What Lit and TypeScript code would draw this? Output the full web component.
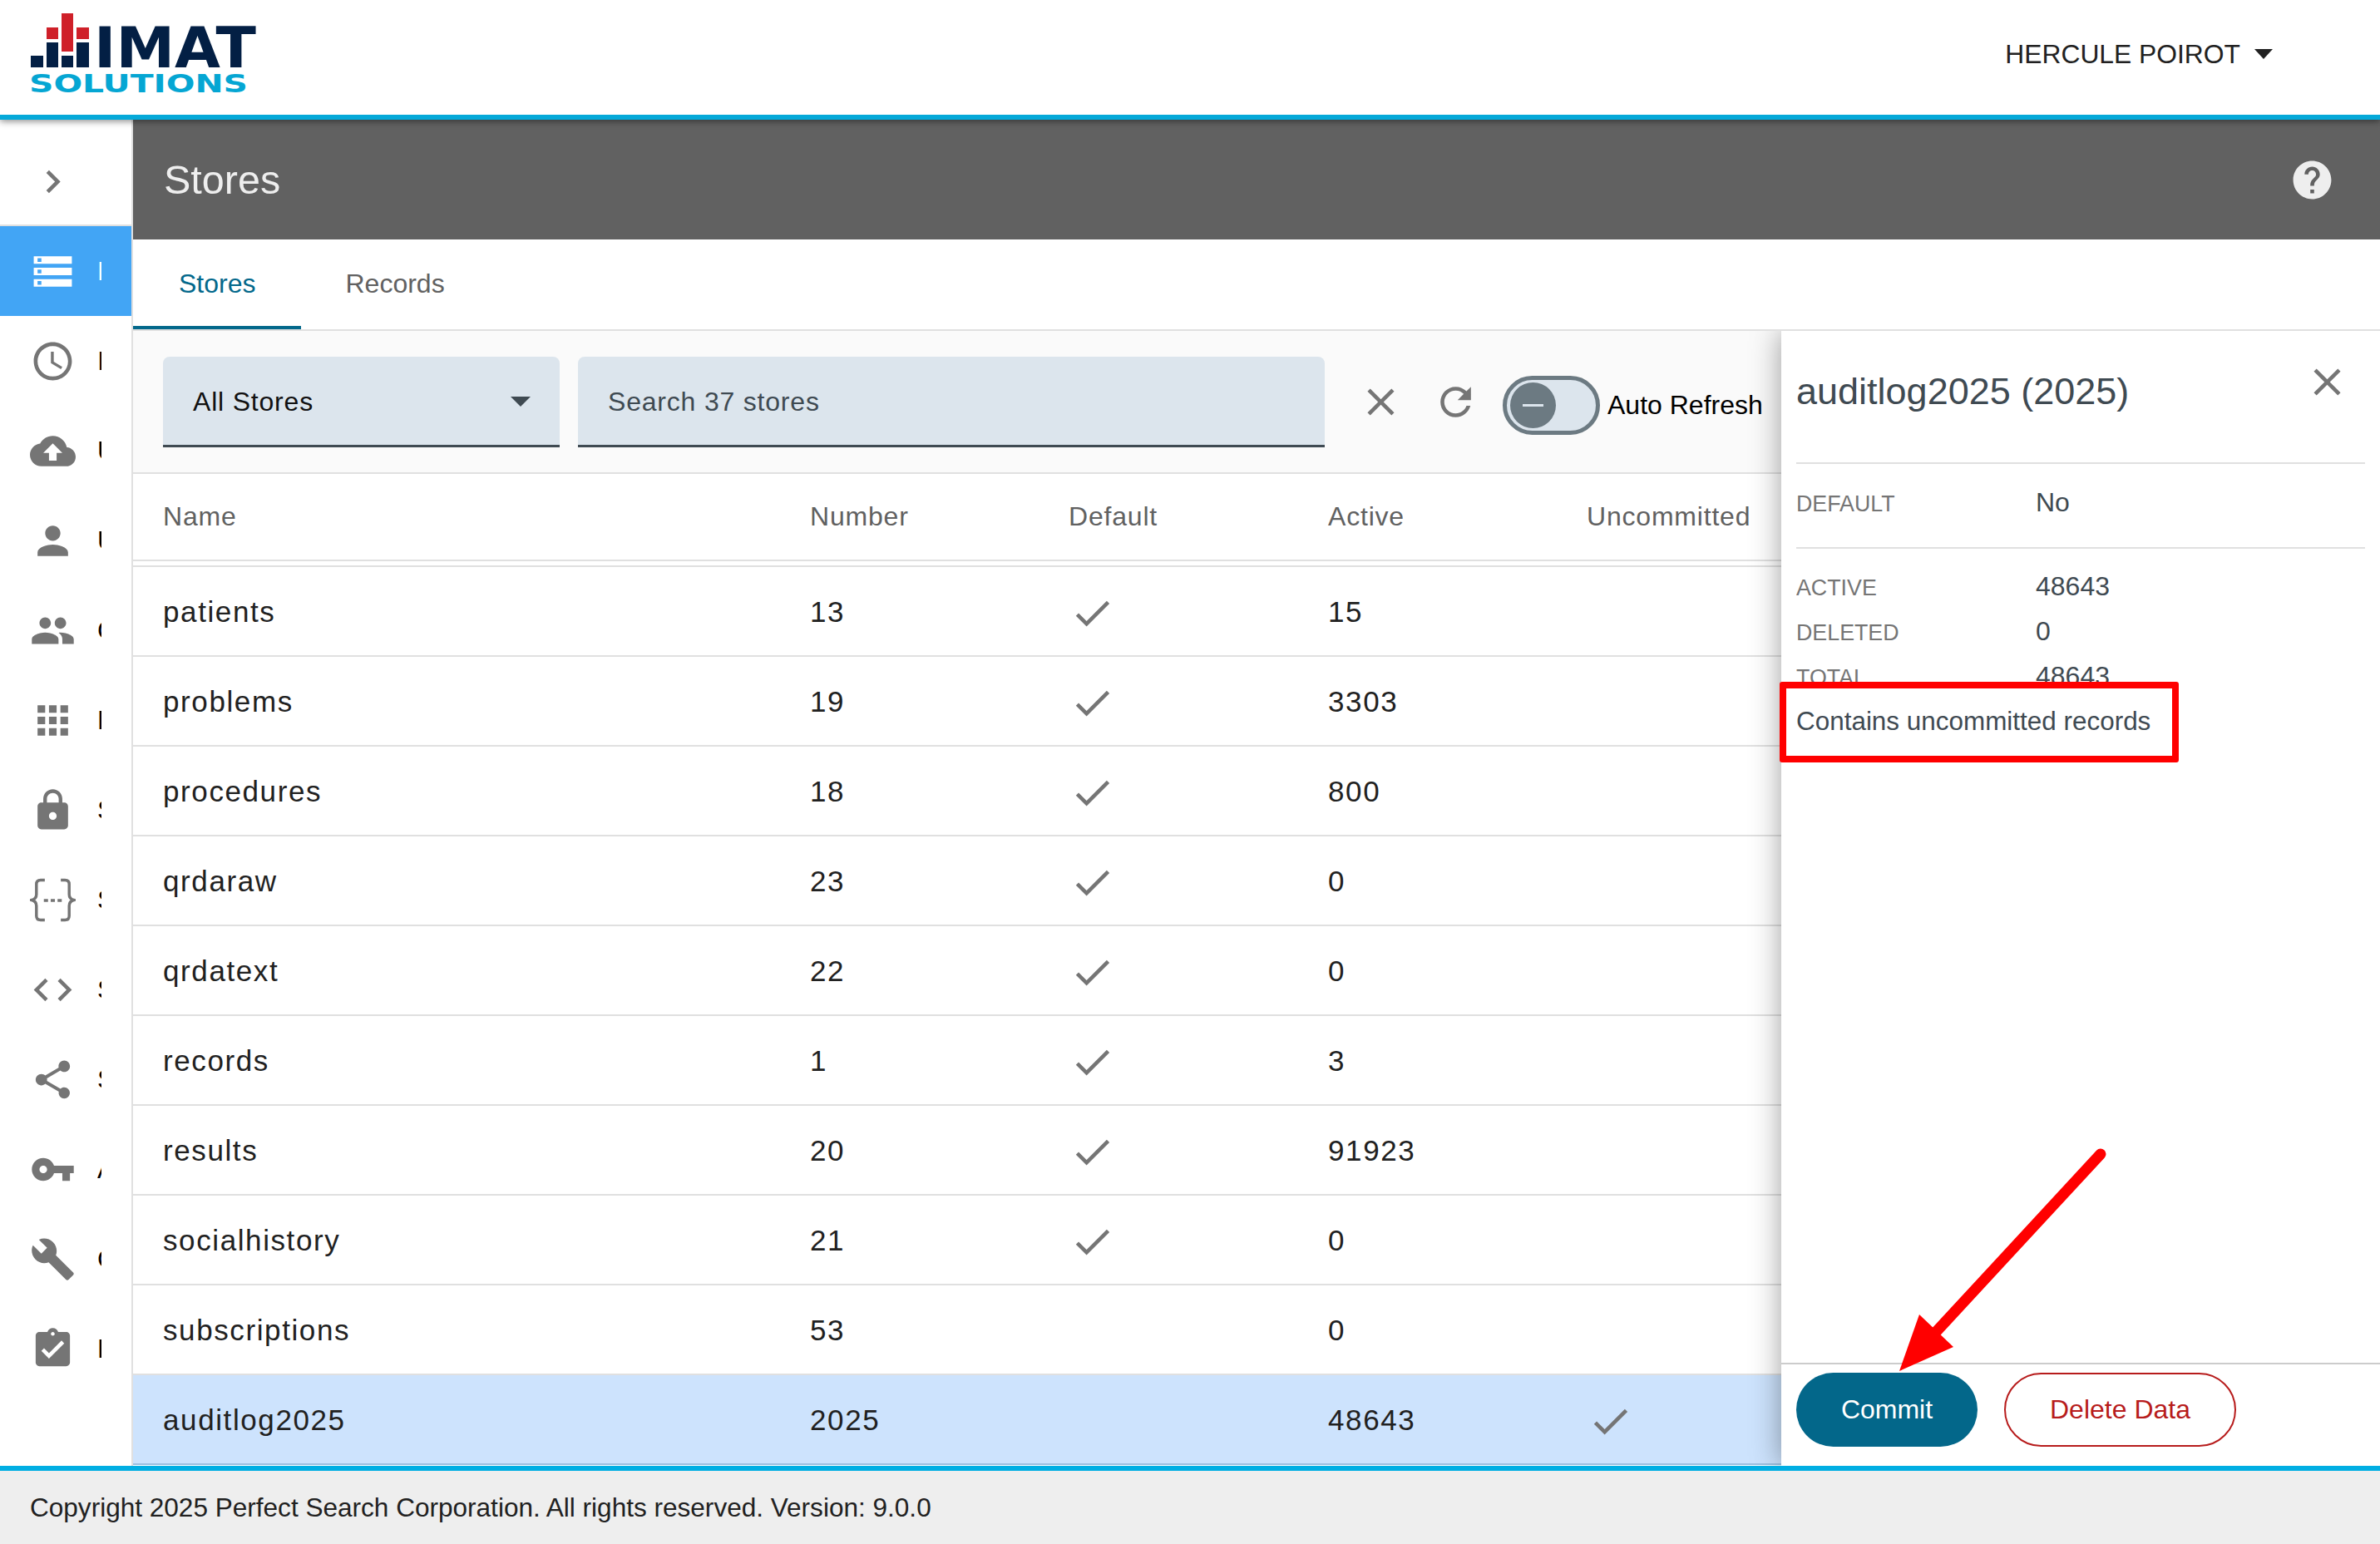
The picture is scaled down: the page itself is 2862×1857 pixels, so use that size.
import { css, html, LitElement, svg } from 'lit';
import { customElement } from 'lit/decorators.js';

const ICONS: Record<string, string> = {
  chevron: 'M10 6L8.59 7.41 13.17 12l-4.58 4.59L10 18l6-6z',
  storage: 'M2 20h20v-4H2v4zm2-3h2v2H4v-2zM2 4v4h20V4H2zm4 3H4V5h2v2zm-4 7h20v-4H2v4zm2-3h2v2H4v-2z',
  schedule: 'M11.99 2C6.47 2 2 6.48 2 12s4.47 10 9.99 10C17.52 22 22 17.52 22 12S17.52 2 11.99 2zM12 20c-4.42 0-8-3.58-8-8s3.58-8 8-8 8 3.58 8 8-3.58 8-8 8zm.5-13H11v6l5.25 3.15.75-1.23-4.5-2.67z',
  upload: 'M19.35 10.04C18.67 6.59 15.64 4 12 4 9.11 4 6.6 5.64 5.35 8.04 2.34 8.36 0 10.91 0 14c0 3.31 2.69 6 6 6h13c2.76 0 5-2.24 5-5 0-2.64-2.05-4.78-4.65-4.96zM14 13v4h-4v-4H7l5-5 5 5h-3z',
  person: 'M12 12c2.21 0 4-1.79 4-4s-1.79-4-4-4-4 1.79-4 4 1.79 4 4 4zm0 2c-2.67 0-8 1.34-8 4v2h16v-2c0-2.66-5.33-4-8-4z',
  people: 'M16 11c1.66 0 2.99-1.34 2.99-3S17.66 5 16 5c-1.66 0-3 1.34-3 3s1.34 3 3 3zm-8 0c1.66 0 2.99-1.34 2.99-3S9.66 5 8 5C6.34 5 5 6.34 5 8s1.34 3 3 3zm0 2c-2.33 0-7 1.17-7 3.5V19h14v-2.5c0-2.33-4.67-3.5-7-3.5zm8 0c-.29 0-.62.02-.97.05 1.16.84 1.97 1.97 1.97 3.45V19h6v-2.5c0-2.33-4.67-3.5-7-3.5z',
  apps: 'M4 8h4V4H4v4zm6 12h4v-4h-4v4zm-6 0h4v-4H4v4zm0-6h4v-4H4v4zm6 0h4v-4h-4v4zm6-10v4h4V4h-4zm-6 4h4V4h-4v4zm6 6h4v-4h-4v4zm0 6h4v-4h-4v4z',
  lock: 'M18 8h-1V6c0-2.76-2.24-5-5-5S7 3.24 7 6v2H6c-1.1 0-2 .9-2 2v10c0 1.1.9 2 2 2h12c1.1 0 2-.9 2-2V10c0-1.1-.9-2-2-2zm-6 9c-1.1 0-2-.9-2-2s.9-2 2-2 2 .9 2 2-.9 2-2 2zm3.1-9H8.9V6c0-1.71 1.39-3.1 3.1-3.1 1.71 0 3.1 1.39 3.1 3.1v2z',
  code: 'M9.4 16.6L4.8 12l4.6-4.6L8 6l-6 6 6 6 1.4-1.4zm5.2 0l4.6-4.6-4.6-4.6L16 6l6 6-6 6-1.4-1.4z',
  share: 'M18 16.08c-.76 0-1.44.3-1.96.77L8.91 12.7c.05-.23.09-.46.09-.7s-.04-.47-.09-.7l7.05-4.11c.54.5 1.25.81 2.04.81 1.66 0 3-1.34 3-3s-1.34-3-3-3-3 1.34-3 3c0 .24.04.47.09.7L8.04 9.81C7.5 9.31 6.79 9 6 9c-1.66 0-3 1.34-3 3s1.34 3 3 3c.79 0 1.5-.31 2.04-.81l7.12 4.16c-.05.21-.08.43-.08.65 0 1.61 1.31 2.92 2.92 2.92 1.61 0 2.92-1.31 2.92-2.92s-1.31-2.92-2.92-2.92z',
  key: 'M12.65 10C11.83 7.67 9.61 6 7 6c-3.31 0-6 2.69-6 6s2.69 6 6 6c2.61 0 4.83-1.67 5.65-4H17v4h4v-4h2v-4H12.65zM7 14c-1.1 0-2-.9-2-2s.9-2 2-2 2 .9 2 2-.9 2-2 2z',
  build: 'M22.7 19l-9.1-9.1c.9-2.3.4-5-1.5-6.9-2-2-5-2.4-7.4-1.3L9 6 6 9 1.6 4.7C.4 7.1.9 10.1 2.9 12.1c1.9 1.9 4.6 2.4 6.9 1.5l9.1 9.1c.4.4 1 .4 1.4 0l2.3-2.3c.5-.4.5-1.1.1-1.4z',
  assignment: 'M19 3h-4.18C14.4 1.84 13.3 1 12 1c-1.3 0-2.4.84-2.82 2H5c-1.1 0-2 .9-2 2v14c0 1.1.9 2 2 2h14c1.1 0 2-.9 2-2V5c0-1.1-.9-2-2-2zm-7 0c.55 0 1 .45 1 1s-.45 1-1 1-1-.45-1-1 .45-1 1-1zm-2 14l-4-4 1.41-1.41L10 14.17l6.59-6.59L18 9l-8 8z',
  close: 'M19 6.41L17.59 5 12 10.59 6.41 5 5 6.41 10.59 12 5 17.59 6.41 19 12 13.41 17.59 19 19 17.59 13.41 12z',
  refresh: 'M17.65 6.35C16.2 4.9 14.21 4 12 4c-4.42 0-7.99 3.58-7.99 8s3.57 8 7.99 8c3.73 0 6.84-2.55 7.73-6h-2.08c-.82 2.33-3.04 4-5.65 4-3.31 0-6-2.69-6-6s2.69-6 6-6c1.66 0 3.14.69 4.22 1.78L13 11h7V4l-2.35 2.35z',
  help: 'M12 2C6.48 2 2 6.48 2 12s4.48 10 10 10 10-4.48 10-10S17.52 2 12 2zm1 17h-2v-2h2v2zm2.07-7.75l-.9.92C13.45 12.9 13 13.5 13 15h-2v-.5c0-1.1.45-2.1 1.17-2.83l1.24-1.26c.37-.36.59-.86.59-1.41 0-1.1-.9-2-2-2s-2 .9-2 2H8c0-2.21 1.79-4 4-4s4 1.79 4 4c0 .88-.36 1.68-.93 2.25z',
  check: 'M9 16.17L4.83 12l-1.42 1.41L9 19 21 7l-1.41-1.41z',
};

const NAV = [
  { icon: 'storage', label: 'Data Stores', selected: true },
  { icon: 'schedule', label: 'Importer' },
  { icon: 'upload', label: 'Upload' },
  { icon: 'person', label: 'Users' },
  { icon: 'people', label: 'Groups' },
  { icon: 'apps', label: 'Modules' },
  { icon: 'lock', label: 'Security' },
  { icon: 'braces', label: 'Schemas' },
  { icon: 'code', label: 'Scripts' },
  { icon: 'share', label: 'Sharing' },
  { icon: 'key', label: 'API Keys' },
  { icon: 'build', label: 'Configuration' },
  { icon: 'assignment', label: 'Reports' },
];

const STORES = [
  { name: 'patients', number: '13', def: true, active: '15' },
  { name: 'problems', number: '19', def: true, active: '3303' },
  { name: 'procedures', number: '18', def: true, active: '800' },
  { name: 'qrdaraw', number: '23', def: true, active: '0' },
  { name: 'qrdatext', number: '22', def: true, active: '0' },
  { name: 'records', number: '1', def: true, active: '3' },
  { name: 'results', number: '20', def: true, active: '91923' },
  { name: 'socialhistory', number: '21', def: true, active: '0' },
  { name: 'subscriptions', number: '53', def: false, active: '0' },
  { name: 'auditlog2025', number: '2025', def: false, active: '48643', uncommitted: true },
];

const STATS = [
  { label: 'ACTIVE', value: '48643' },
  { label: 'DELETED', value: '0' },
  { label: 'TOTAL', value: '48643' },
];

function icon(name: string) {
  if (name === 'braces') {
    return html`<svg class="icon" viewBox="0 0 24 24">
      <path class="stroke" d="M7.8 1.5H5.6c-1.5 0-2.2.8-2.2 2.2V9c0 1.7-1 2.6-2.4 3 1.4.4 2.4 1.3 2.4 3v5.3c0 1.4.7 2.2 2.2 2.2h2.2" />
      <path class="stroke" d="M16.2 1.5h2.2c1.5 0 2.2.8 2.2 2.2V9c0 1.7 1 2.6 2.4 3-1.4.4-2.4 1.3-2.4 3v5.3c0 1.4-.7 2.2-2.2 2.2h-2.2" />
      <path d="M7.3 11.4h2.2V13H7.3zM10.9 11.4h2.2V13h-2.2zM14.5 11.4h2.2V13h-2.2z" />
    </svg>`;
  }
  return html`<svg class="icon" viewBox="0 0 24 24"><path d=${ICONS[name]} /></svg>`;
}

@customElement('app-root')
export class AppRoot extends LitElement {
  static styles = css`
    :host {
      display: block;
      width: 2862px;
      height: 1857px;
      overflow: hidden;
      position: relative;
      background: #fff;
      color: #212121;
      font-family: 'Liberation Sans', Arial, sans-serif;
      font-size: 32px;
    }

    .app {
      display: flex;
      flex-direction: column;
      height: 100%;
    }

    .icon {
      display: block;
      flex: none;
      width: 55px;
      height: 55px;
      fill: #757575;
    }

    .icon .stroke {
      fill: none;
      stroke: #757575;
      stroke-width: 1.5;
    }

    /* Top bar */
    .topbar {
      flex: none;
      position: relative;
      z-index: 3;
      box-sizing: border-box;
      height: 144px;
      display: flex;
      align-items: center;
      justify-content: space-between;
      background: #fff;
      border-bottom: 6px solid #05a9d9;
      box-shadow: 0 2px 8px rgba(0, 0, 0, 0.45);
    }

    .logo {
      display: block;
      width: 320px;
      height: 138px;
    }

    .logo-imat {
      font-family: 'DejaVu Sans', sans-serif;
      font-size: 67px;
      font-weight: 700;
      fill: #031f44;
    }

    .logo-sol {
      font-family: 'DejaVu Sans', sans-serif;
      font-size: 30px;
      font-weight: 700;
      fill: #05a6d3;
    }

    .user {
      display: flex;
      align-items: center;
      margin-right: 129px;
      margin-bottom: 8px;
      font-size: 31.8px;
    }

    .user-caret {
      width: 0;
      height: 0;
      margin-left: 17px;
      border-left: 11px solid transparent;
      border-right: 11px solid transparent;
      border-top: 12px solid #212121;
    }

    /* Body */
    .body {
      flex: 1;
      min-height: 0;
      display: flex;
    }

    .sidenav {
      flex: none;
      width: 158px;
      border-right: 2px solid #e0e0e0;
    }

    .nav-toggle {
      box-sizing: border-box;
      height: 128px;
      padding: 22px 0 0 36px;
      display: flex;
      align-items: center;
      border-bottom: 2px solid #e0e0e0;
    }

    .nav-item {
      height: 108px;
      display: flex;
      align-items: center;
      padding-left: 35.5px;
      color: #000;
    }

    .nav-item.selected {
      background: #42a5f5;
      color: #fff;
    }

    .nav-item.selected .icon {
      fill: #fff;
    }

    .nav-label {
      margin-left: 26.5px;
      width: 5px;
      overflow: hidden;
      white-space: nowrap;
    }

    .main {
      flex: 1;
      min-width: 0;
      display: flex;
      flex-direction: column;
    }

    .title-bar {
      flex: none;
      box-sizing: border-box;
      height: 144px;
      padding: 0 54px 0 37px;
      display: flex;
      align-items: center;
      justify-content: space-between;
      background: #616161;
      color: #eee;
      font-size: 48.5px;
    }

    .title-bar .icon {
      fill: #eee;
    }

    .tabs {
      flex: none;
      box-sizing: border-box;
      height: 110px;
      display: flex;
      border-bottom: 2px solid #e0e0e0;
    }

    .tab {
      box-sizing: border-box;
      height: 108px;
      padding: 3px 55px 0;
      display: flex;
      align-items: center;
      color: #616161;
      border-bottom: 4px solid transparent;
    }

    .tab.active {
      color: #03688b;
      border-bottom-color: #03688b;
    }

    .tab + .tab {
      margin-left: -2px;
    }

    .content {
      flex: 1;
      min-height: 0;
      display: flex;
      overflow: hidden;
    }

    .stores {
      flex: 1;
      min-width: 0;
    }

    /* Toolbar */
    .toolbar {
      box-sizing: border-box;
      height: 172px;
      display: flex;
      align-items: center;
      padding-left: 36px;
      background: #fafafa;
      border-bottom: 2px solid #e0e0e0;
      letter-spacing: 0.8px;
    }

    .field {
      box-sizing: border-box;
      height: 109px;
      display: flex;
      align-items: center;
      justify-content: space-between;
      padding: 3px 35px 0 36px;
      background: #dce5ed;
      border-bottom: 3px solid #3f4a52;
      border-radius: 8px 8px 0 0;
    }

    .field-select {
      width: 477px;
      color: #111;
    }

    .field-search {
      width: 898px;
      margin-left: 22px;
      color: #3f4a52;
    }

    .field-caret {
      width: 0;
      height: 0;
      border-left: 12px solid transparent;
      border-right: 12px solid transparent;
      border-top: 12px solid #3f4a52;
    }

    .tool-close {
      margin-left: 40px;
    }

    .tool-refresh {
      margin-left: 35px;
    }

    .switch {
      box-sizing: border-box;
      width: 117px;
      height: 71px;
      margin: 8px 0 0 29px;
      padding-left: 4px;
      display: flex;
      align-items: center;
      background: #dce5ed;
      border: 5px solid #6c7a82;
      border-radius: 36px;
    }

    .switch-thumb {
      width: 55px;
      height: 55px;
      display: flex;
      align-items: center;
      justify-content: center;
      border-radius: 50%;
      background: #6c7a82;
    }

    .switch-thumb i {
      display: block;
      width: 25px;
      height: 3px;
      background: #dce5ed;
    }

    .switch-label {
      margin: 8px 0 0 9px;
      color: #000;
      letter-spacing: 0;
      white-space: nowrap;
    }

    /* Table */
    .row {
      display: grid;
      grid-template-columns: 778px 311px 312px 311px 1fr;
      align-items: center;
      padding-left: 36px;
      white-space: nowrap;
    }

    .row-head {
      box-sizing: border-box;
      height: 105px;
      border-bottom: 2px solid #e0e0e0;
      margin-bottom: 5px;
      color: #616161;
      letter-spacing: 0.8px;
    }

    .row-body {
      box-sizing: border-box;
      height: 108px;
      padding-top: 2px;
      font-size: 35px;
      letter-spacing: 1.6px;
      border-bottom: 2px solid #e0e0e0;
    }

    .row-first {
      border-top: 2px solid #e0e0e0;
      height: 110px;
    }

    .row-body .icon {
      margin: 2px 0 0 1px;
    }

    .row-body.selected {
      background: #cde3fd;
      border-bottom-color: #9bbfe0;
    }

    /* Detail panel */
    .panel {
      flex: none;
      position: relative;
      z-index: 1;
      width: 720px;
      display: flex;
      flex-direction: column;
      background: #fff;
      color: #3f4a52;
      box-shadow: 0 0 34px rgba(0, 0, 0, 0.38);
    }

    .panel-head {
      box-sizing: border-box;
      height: 160px;
      margin: 0 18px;
      display: flex;
      justify-content: space-between;
      border-bottom: 2px solid #e0e0e0;
    }

    .panel-title {
      margin-top: 48px;
      font-size: 45px;
      line-height: 50px;
    }

    .panel-head .icon {
      margin: 34px 18px 0 0;
    }

    .panel-default {
      box-sizing: border-box;
      height: 102px;
      margin: 0 18px;
      padding-top: 19px;
      border-bottom: 2px solid #e0e0e0;
    }

    .panel-stats {
      height: 160px;
      overflow: hidden;
      margin: 0 18px;
      padding-top: 18px;
      box-sizing: border-box;
    }

    .stat {
      display: grid;
      grid-template-columns: 288px 1fr;
      align-items: baseline;
      height: 54px;
      line-height: 54px;
    }

    .stat-label {
      font-size: 26.8px;
      color: #757575;
    }

    .notice {
      box-sizing: border-box;
      width: 480px;
      height: 97px;
      margin-left: -2px;
      padding: 0 0 2px 12px;
      display: flex;
      align-items: center;
      background: #fff;
      border: 8px solid #f00;
      border-radius: 3px;
      font-size: 31.45px;
      white-space: nowrap;
    }

    .panel-foot {
      box-sizing: border-box;
      height: 124px;
      margin-top: auto;
      padding: 10px 19px 0 18px;
      display: flex;
      gap: 32px;
      border-top: 2px solid #ccc;
    }

    .btn {
      box-sizing: border-box;
      height: 89px;
      display: flex;
      align-items: center;
      justify-content: center;
      border-radius: 45px;
    }

    .btn-commit {
      width: 218px;
      background: #03678a;
      color: #fff;
    }

    .btn-delete {
      width: 279px;
      border: 2px solid #b71c1c;
      color: #b71c1c;
    }

    .footer {
      flex: none;
      box-sizing: border-box;
      height: 94px;
      padding-left: 36px;
      display: flex;
      align-items: center;
      background: #eee;
      border-top: 6px solid #00aee3;
      font-size: 31.55px;
    }

    .arrow {
      position: absolute;
      inset: 0;
      z-index: 5;
      width: 2862px;
      height: 1857px;
      pointer-events: none;
    }
  `;

  private renderLogo() {
    const navy = [[37, 67, 15, 14], [56, 51, 14, 30], [74, 67, 14, 14], [92, 51, 15, 30]];
    const red = [[74, 16, 14, 46], [56, 33, 14, 14], [92, 33, 15, 14]];
    return html`<svg class="logo" viewBox="0 0 320 138">
      ${navy.map(([x, y, w, h]) => svg`<rect x=${x} y=${y} width=${w} height=${h} fill="#031f44" />`)}
      ${red.map(([x, y, w, h]) => svg`<rect x=${x} y=${y} width=${w} height=${h} fill="#cf2029" />`)}
      <text class="logo-imat" x="113" y="81" textLength="195" lengthAdjust="spacingAndGlyphs">IMAT</text>
      <text class="logo-sol" x="35" y="111" textLength="263" lengthAdjust="spacingAndGlyphs">SOLUTIONS</text>
    </svg>`;
  }

  private renderNav() {
    return html`<nav class="sidenav">
      <div class="nav-toggle">${icon('chevron')}</div>
      ${NAV.map(
        (item) => html`<div class="nav-item ${item.selected ? 'selected' : ''}">
          ${icon(item.icon)}
          <span class="nav-label">${item.label}</span>
        </div>`,
      )}
    </nav>`;
  }

  private renderTable() {
    return html`
      <div class="row row-head">
        <span>Name</span><span>Number</span><span>Default</span><span>Active</span><span>Uncommitted</span>
      </div>
      ${STORES.map(
        (s, i) => html`<div class="row row-body ${i === 0 ? 'row-first' : ''} ${s.uncommitted ? 'selected' : ''}">
          <span>${s.name}</span>
          <span>${s.number}</span>
          <span>${s.def ? icon('check') : ''}</span>
          <span>${s.active}</span>
          <span>${s.uncommitted ? icon('check') : ''}</span>
        </div>`,
      )}
    `;
  }

  private renderPanel() {
    return html`<aside class="panel">
      <div class="panel-head">
        <div class="panel-title">auditlog2025 (2025)</div>
        ${icon('close')}
      </div>
      <div class="panel-default">
        <div class="stat"><span class="stat-label">DEFAULT</span><span>No</span></div>
      </div>
      <div class="panel-stats">
        ${STATS.map(
          (s) => html`<div class="stat"><span class="stat-label">${s.label}</span><span>${s.value}</span></div>`,
        )}
      </div>
      <div class="notice">Contains uncommitted records</div>
      <div class="panel-foot">
        <div class="btn btn-commit">Commit</div>
        <div class="btn btn-delete">Delete Data</div>
      </div>
    </aside>`;
  }

  render() {
    return html`
      <div class="app">
        <header class="topbar">
          ${this.renderLogo()}
          <div class="user"><span>HERCULE POIROT</span><span class="user-caret"></span></div>
        </header>
        <div class="body">
          ${this.renderNav()}
          <main class="main">
            <div class="title-bar"><span>Stores</span>${icon('help')}</div>
            <div class="tabs">
              <div class="tab active">Stores</div>
              <div class="tab">Records</div>
            </div>
            <div class="content">
              <section class="stores">
                <div class="toolbar">
                  <div class="field field-select"><span>All Stores</span><span class="field-caret"></span></div>
                  <div class="field field-search"><span>Search 37 stores</span></div>
                  <span class="tool-close">${icon('close')}</span>
                  <span class="tool-refresh">${icon('refresh')}</span>
                  <div class="switch"><div class="switch-thumb"><i></i></div></div>
                  <span class="switch-label">Auto Refresh</span>
                </div>
                ${this.renderTable()}
              </section>
              ${this.renderPanel()}
            </div>
          </main>
        </div>
        <footer class="footer">Copyright 2025 Perfect Search Corporation. All rights reserved. Version: 9.0.0</footer>
      </div>
      <svg class="arrow" viewBox="0 0 2862 1857">
        <line x1="2526" y1="1388" x2="2328" y2="1602" stroke="#f00" stroke-width="13" stroke-linecap="round" />
        <polygon points="2284,1649 2308,1581 2349,1620" fill="#f00" />
      </svg>
    `;
  }
}
